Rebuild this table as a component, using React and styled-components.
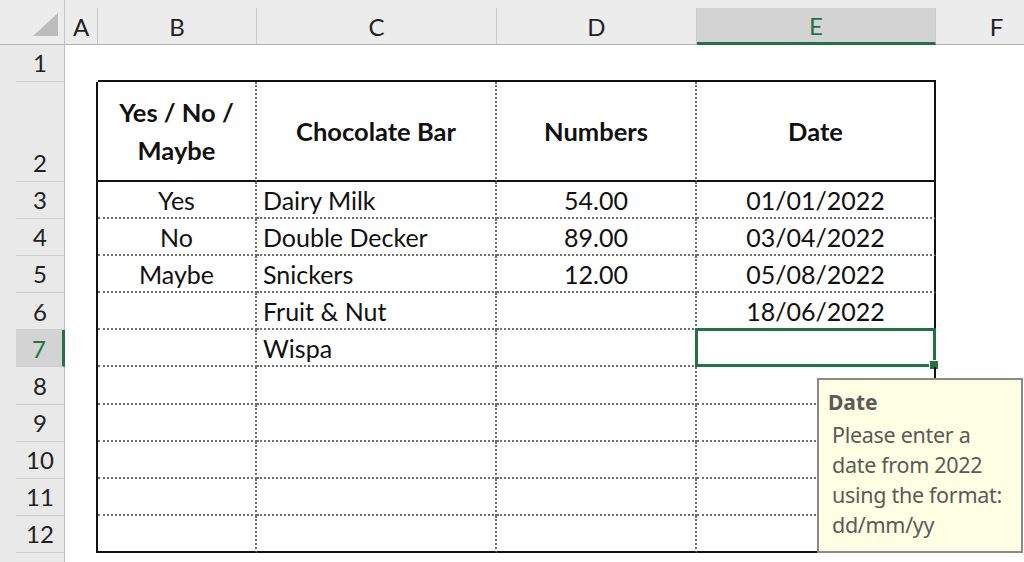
import React from 'react';
import styled, { createGlobalStyle, css } from 'styled-components';

const GlobalStyle = createGlobalStyle`
  body {
    margin: 0;
    background: #ffffff;
    overflow: hidden;
    font-family: Lato, "Liberation Sans", sans-serif;
  }
`;

const GREEN = '#217346';
const SOLID = '2px solid #111';
const DOTS = '2px dotted #6e6e6e';

const columns = ['A', 'B', 'C', 'D', 'E', 'F'];

const rows = [
  ['', 'Yes', 'Dairy Milk', '54.00', '01/01/2022'],
  ['', 'No', 'Double Decker', '89.00', '03/04/2022'],
  ['', 'Maybe', 'Snickers', '12.00', '05/08/2022'],
  ['', '', 'Fruit & Nut', '', '18/06/2022'],
  ['', '', 'Wispa', '', ''],
  ['', '', '', '', ''],
  ['', '', '', '', ''],
  ['', '', '', '', ''],
  ['', '', '', '', ''],
  ['', '', '', '', ''],
];

const align = ['left', 'center', 'left', 'center', 'center', 'left'];

const Sheet = styled.div`
  width: 1024px;
  height: 562px;
  overflow: hidden;
  display: grid;
  grid-template-columns: 65px 33px 159px 240px 200px 239px 122px;
  grid-template-rows: 45px 37px 100px repeat(10, 37.1px) 40px;
`;

const Corner = styled.div`
  background: #ececec;
  border-bottom: 1px solid #b4b4b4;
  border-right: 1px solid #c4c4c4;
  display: flex;
  align-items: flex-end;
  justify-content: flex-end;
  padding: 0 5px 8px 0;
  box-sizing: border-box;
`;

const ColHead = styled.div`
  background: #ececec;
  border-bottom: 1px solid #b4b4b4;
  padding-top: 8px;
  box-sizing: border-box;
  display: flex;
`;

const ColLabel = styled.div`
  flex: 1;
  display: flex;
  align-items: center;
  justify-content: center;
  font-size: 24px;
  color: #222;
  border-right: 1px solid #cacaca;
  ${(p) =>
    p.$active &&
    css`
      background: #d3d3d3;
      color: ${GREEN};
      border-bottom: 3px solid ${GREEN};
      margin-bottom: -1px;
    `}
`;

const RowHead = styled.div`
  background: #e9e9e9;
  border-right: 1px solid #bfbfbf;
  padding-left: 16px;
  display: flex;
  box-sizing: border-box;
`;

const RowNum = styled.div`
  flex: 1;
  display: flex;
  align-items: flex-end;
  justify-content: center;
  padding-bottom: 3px;
  font-size: 24px;
  line-height: 1.2;
  color: #222;
  border-bottom: 1px solid #cdcdcd;
  ${(p) =>
    p.$active &&
    css`
      background: #d3d3d3;
      color: ${GREEN};
      border-right: 3px solid ${GREEN};
      margin-right: -1px;
    `}
`;

const Cell = styled.div`
  position: relative;
  box-sizing: border-box;
  display: flex;
  align-items: ${(p) => (p.$head ? 'center' : 'flex-end')};
  justify-content: ${(p) => (p.$align === 'center' ? 'center' : 'flex-start')};
  text-align: ${(p) => p.$align};
  padding: ${(p) => (p.$head ? '0 4px' : '0 6px 2px')};
  font-size: ${(p) => (p.$head ? '25.5px' : '25px')};
  line-height: ${(p) => (p.$head ? 1.5 : 1.2)};
  font-weight: ${(p) => (p.$head ? 700 : 400)};
  color: #111;
  white-space: ${(p) => (p.$head ? 'normal' : 'nowrap')};
  border-right: ${(p) => p.$right || 'none'};
  border-bottom: ${(p) => p.$bottom || 'none'};
`;

const Selection = styled.div`
  position: absolute;
  left: -2px;
  top: -2px;
  right: -2px;
  bottom: -2px;
  border: 3px solid ${GREEN};
  pointer-events: none;
`;

const FillHandle = styled.div`
  position: absolute;
  right: -6px;
  bottom: -6px;
  width: 8px;
  height: 8px;
  background: ${GREEN};
  border: 1px solid #fff;
`;

const Tooltip = styled.div`
  position: absolute;
  left: 120px;
  top: 48px;
  width: 206px;
  height: 175px;
  box-sizing: border-box;
  background: #ffffe3;
  border: 2px solid #8a8a8a;
  padding: 8px 4px 0 9px;
  z-index: 5;
  font-family: "Noto Sans", "Open Sans", sans-serif;
  color: #5a5a5a;
  white-space: nowrap;
  text-align: left;
`;

const TipTitle = styled.div`
  font-weight: 700;
  font-size: 21px;
  line-height: 28px;
`;

const TipText = styled.div`
  margin-top: 4px;
  padding-left: 4px;
  font-size: 21.5px;
  line-height: 30px;
  letter-spacing: -0.3px;
`;

function borders(col, rowIdx) {
  // rowIdx: 1 = row 1, 2 = header row, 3..12 = data rows
  let right = 'none';
  let bottom = 'none';
  if (col === 0 && rowIdx >= 2) right = SOLID;
  if (col >= 1 && col <= 4) {
    if (rowIdx === 1) bottom = SOLID;
    else {
      right = col === 4 ? SOLID : DOTS;
      if (rowIdx === 2 || rowIdx === 12) bottom = SOLID;
      else bottom = DOTS;
    }
  }
  return { right, bottom };
}

const headers = ['', 'Yes / No / Maybe', 'Chocolate Bar', 'Numbers', 'Date', ''];

export default function App() {
  const renderRow = (rowIdx, values, head) => (
    <React.Fragment key={rowIdx}>
      <RowHead>
        <RowNum $active={rowIdx === 7}>{rowIdx}</RowNum>
      </RowHead>
      {columns.map((c, i) => {
        const b = borders(i, rowIdx);
        const selected = rowIdx === 7 && c === 'E';
        return (
          <Cell
            key={c}
            $align={head ? 'center' : align[i]}
            $head={head}
            $right={b.right}
            $bottom={b.bottom}
          >
            {values[i] || ''}
            {selected && (
              <>
                <Selection>
                  <FillHandle />
                </Selection>
                <Tooltip>
                  <TipTitle>Date</TipTitle>
                  <TipText>
                    Please enter a
                    <br />
                    date from 2022
                    <br />
                    using the format:
                    <br />
                    dd/mm/yy
                  </TipText>
                </Tooltip>
              </>
            )}
          </Cell>
        );
      })}
    </React.Fragment>
  );

  return (
    <>
      <GlobalStyle />
      <Sheet>
        <Corner>
          <svg width="26" height="23" viewBox="0 0 26 23">
            <polygon points="25,0 25,23 0,23" fill="#bcbcbc" />
          </svg>
        </Corner>
        {columns.map((c) => (
          <ColHead key={c}>
            <ColLabel $active={c === 'E'}>{c}</ColLabel>
          </ColHead>
        ))}
        {renderRow(1, [], false)}
        {renderRow(2, headers, true)}
        {rows.map((r, i) => renderRow(i + 3, r, false))}
        <RowHead>
          <RowNum />
        </RowHead>
      </Sheet>
    </>
  );
}
